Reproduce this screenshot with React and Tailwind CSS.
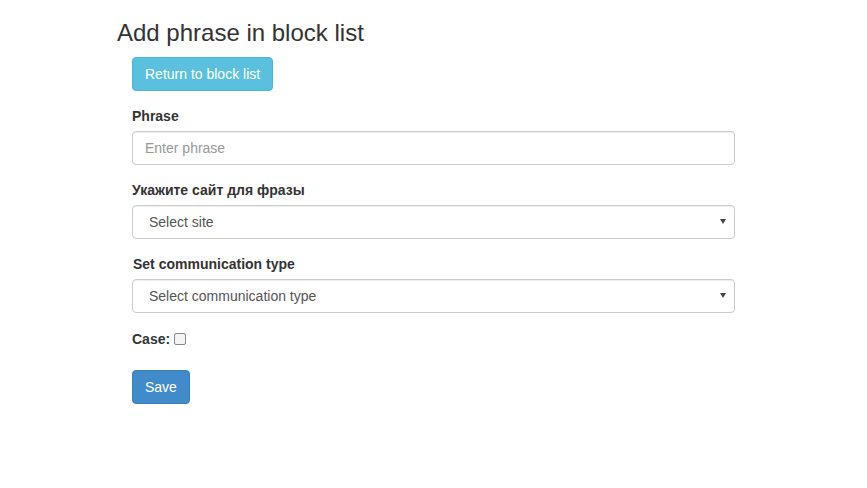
export default function App() {
  return (
    <div className="min-h-[488px] bg-white text-[#333] text-[14px] leading-[20px]" style={{ fontFamily: '"Liberation Sans", Arial, sans-serif' }}>
      <div className="pl-[117px] w-[750px]">
        <h3 className="text-[24px] leading-[26.4px] font-normal mt-[20px] mb-[10px]">Add phrase in block list</h3>
        <div className="pl-[15px] w-[618px]">
          <button className="mt-px h-[34px] px-[12px] bg-[#5bc0de] border border-[#46b8da] rounded-[4px] text-white text-[14px]">Return to block list</button>
          <div className="mt-[15px]">
            <label className="block font-bold mb-[5px]">Phrase</label>
            <input className="block w-full h-[34px] px-[12px] border border-[#ccc] rounded-[4px] text-[14px] text-[#555] placeholder:text-[#999] shadow-[inset_0_1px_1px_rgba(0,0,0,0.075)]" placeholder="Enter phrase" />
          </div>
          <div className="mt-[15px]">
            <label className="block font-bold mb-[5px]">Укажите сайт для фразы</label>
            <div className="relative h-[34px] border border-[#ccc] rounded-[4px] flex items-center pl-[16px] text-[#555] shadow-[inset_0_1px_1px_rgba(0,0,0,0.075)]">
              Select site
              <span className="absolute right-[8px] top-[13px] w-0 h-0 border-l-[3px] border-r-[3px] border-t-[5px] border-l-transparent border-r-transparent border-t-[#444]"></span>
            </div>
          </div>
          <div className="mt-[15px]">
            <label className="block font-bold mb-[5px] pl-px">Set communication type</label>
            <div className="relative h-[34px] border border-[#ccc] rounded-[4px] flex items-center pl-[16px] text-[#555] shadow-[inset_0_1px_1px_rgba(0,0,0,0.075)]">
              Select communication type
              <span className="absolute right-[8px] top-[13px] w-0 h-0 border-l-[3px] border-r-[3px] border-t-[5px] border-l-transparent border-r-transparent border-t-[#444]"></span>
            </div>
          </div>
          <div className="mt-[16px] flex items-center h-[20px]">
            <span className="font-bold">Case:</span>
            <span className="ml-[4px] -mt-[1px] w-[12px] h-[12px] border border-[#888] rounded-[2px] bg-[#f4f4f4]"></span>
          </div>
          <button className="mt-[21px] h-[34px] px-[12px] bg-[#428bca] border border-[#357ebd] rounded-[4px] text-white text-[14px]">Save</button>
        </div>
      </div>
    </div>
  );
}
